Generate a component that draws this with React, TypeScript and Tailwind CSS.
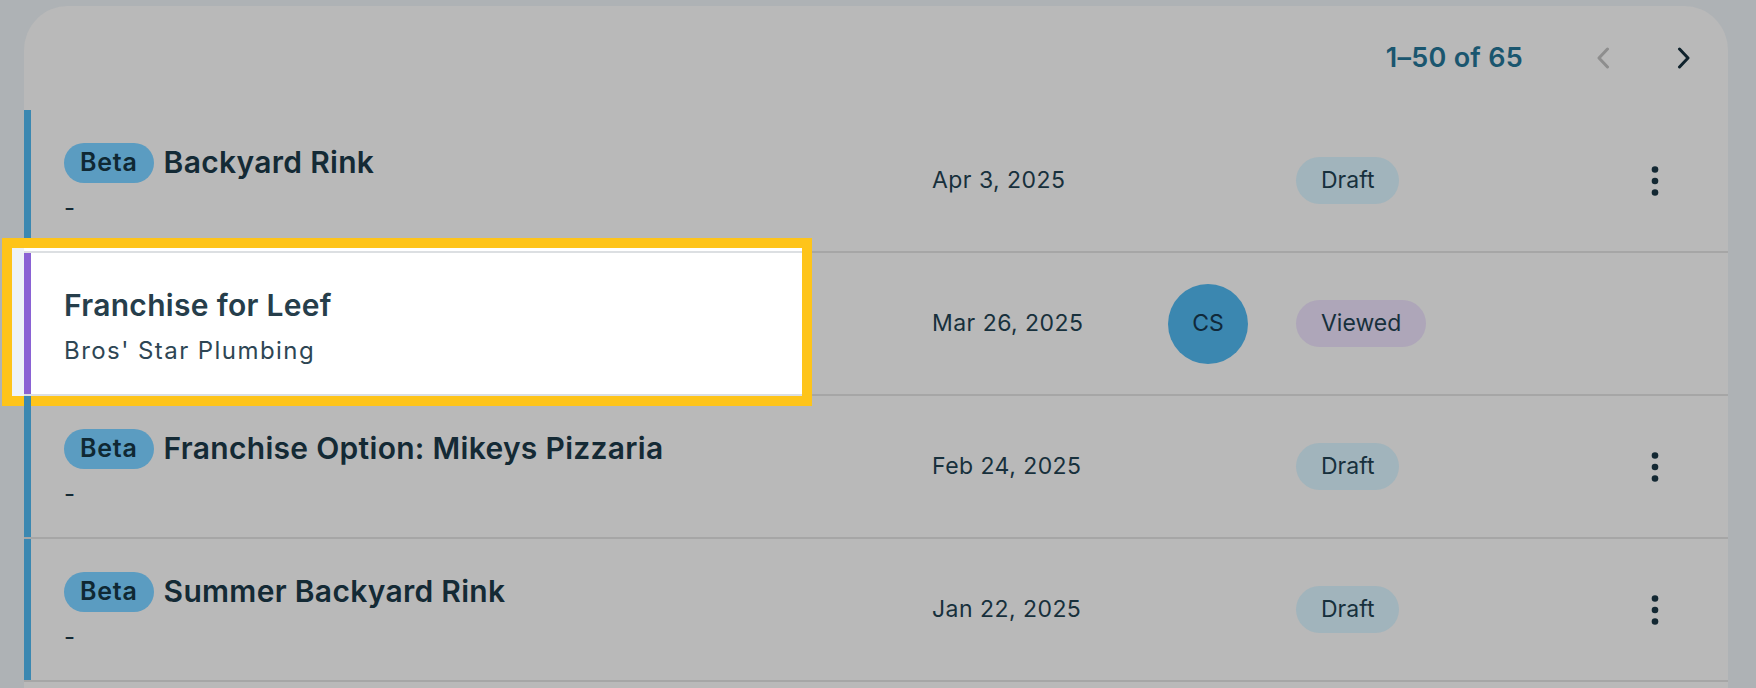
import React from "react";

type Row = {
    title: string;
    sub: string;
    date: string;
    status: "Draft" | "Viewed";
    beta?: boolean;
    avatar?: string;
    focus?: boolean;
};

const rows: Row[] = [
    { title: "Backyard Rink", sub: "-", date: "Apr 3, 2025", status: "Draft", beta: true },
    { title: "Franchise for Leef", sub: "Bros' Star Plumbing", date: "Mar 26, 2025", status: "Viewed", avatar: "CS", focus: true },
    { title: "Franchise Option: Mikeys Pizzaria", sub: "-", date: "Feb 24, 2025", status: "Draft", beta: true },
    { title: "Summer Backyard Rink", sub: "-", date: "Jan 22, 2025", status: "Draft", beta: true },
];

const Kebab = () => (
    <svg width="8" height="30" viewBox="0 0 8 30" fill="#132833">
        <circle cx="4" cy="3.5" r="3.3" />
        <circle cx="4" cy="15" r="3.3" />
        <circle cx="4" cy="26.5" r="3.3" />
    </svg>
);

const ListRow = ({ row }: { row: Row }) => {
    return (
        <div className="relative flex h-[143px] border-b-2 border-[#a6a6a6]">
            {row.focus && (
                // tour spotlight behind the focused cell
                <div className="absolute -left-[12px] -top-[5px] h-[148px] w-[790px] bg-white ring-[10px] ring-[#fec41a] flex">
                    <div className="w-[12px] h-full bg-[#eef3f8]" />
                    <div className="flex-1 mt-[3px] border-y-2 border-[#dcdfe2]" />
                </div>
            )}

            <div className={`relative w-[7px] shrink-0 ${row.focus ? "bg-[#8a62d4]" : "bg-[#3b88b1]"}`} />

            <div className="relative w-[901px] shrink-0 pl-[33px] pt-[4px] flex flex-col justify-center">
                <div className="flex items-center gap-[10px] h-[40px]">
                    {row.beta && (
                        <span className="h-[40px] px-[16px] rounded-full bg-[#5b9cc1] flex items-center text-[25px] font-semibold tracking-[0.03em] text-[#0f2833]">
                            Beta
                        </span>
                    )}
                    <span className={`text-[30px] font-semibold tracking-[0.01em] ${row.focus ? "text-[#263e4b]" : "text-[#142a35]"}`}>
                        {row.title}
                    </span>
                </div>
                <p className={`mt-[10px] leading-[30px] text-[24px] tracking-[0.06em] ${row.focus ? "text-[#2e4654]" : "text-[#142a35]"}`}>
                    {row.sub}
                </p>
            </div>

            <div className="w-[236px] shrink-0 flex items-center text-[23px] tracking-[0.02em] text-[#17303c]">
                {row.date}
            </div>

            <div className="w-[128px] shrink-0 flex items-center">
                {row.avatar && (
                    <div className="w-[80px] h-[80px] rounded-full bg-[#3b87b0] flex items-center justify-center text-[23px] text-[#10293a]">
                        {row.avatar}
                    </div>
                )}
            </div>

            <div className="flex-1 flex items-center">
                <span
                    className={`h-[47px] px-[25px] rounded-full flex items-center text-[23px] text-[#17303c] ${
                        row.status === "Draft" ? "bg-[#a1b4bc]" : "bg-[#aea6b9]"
                    }`}
                >
                    {row.status}
                </span>
            </div>

            <div className="w-[40px] mr-[53px] flex items-center justify-center">
                {!row.focus && <Kebab />}
            </div>
        </div>
    );
};

const App = () => {
    return (
        <div className="w-full h-[688px] overflow-hidden bg-[#aeb2b5] pt-[6px] pl-[24px] pr-[28px]" style={{ fontFamily: "Inter, 'Noto Sans', sans-serif" }}>
            <div className="bg-[#b9b9b9] rounded-t-[44px] min-h-[800px]">
                <div className="h-[104px] flex items-center justify-end pr-[24px]">
                    <span className="text-[27px] font-semibold tracking-[0.01em] text-[#1a566f]">1–50 of 65</span>
                    <button className="ml-[60px] w-[40px] h-[40px] flex items-center justify-center">
                        <svg width="14" height="22" viewBox="0 0 14 22" fill="none" stroke="#8e8e8e" strokeWidth="3" strokeLinecap="round" strokeLinejoin="round">
                            <path d="M11.5 2 L3 11 L11.5 20" />
                        </svg>
                    </button>
                    <button className="ml-[41px] w-[40px] h-[40px] flex items-center justify-center">
                        <svg width="14" height="22" viewBox="0 0 14 22" fill="none" stroke="#10232d" strokeWidth="3" strokeLinecap="round" strokeLinejoin="round">
                            <path d="M2.5 2 L11 11 L2.5 20" />
                        </svg>
                    </button>
                </div>

                {rows.map((r) => (
                    <ListRow key={r.title} row={r} />
                ))}
            </div>
        </div>
    );
};

export default App;
